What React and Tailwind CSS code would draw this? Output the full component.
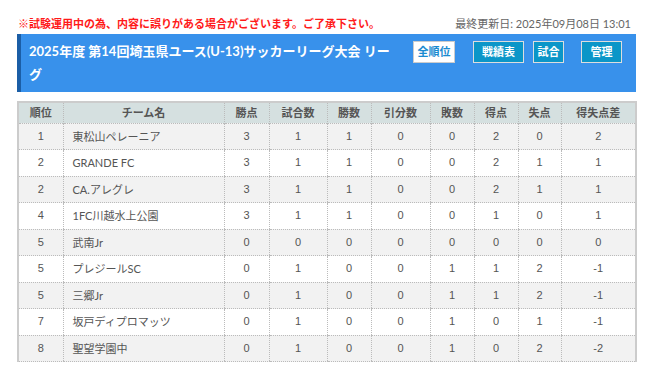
const rows = [
  ['1', '東松山ペレーニア', '3', '1', '1', '0', '0', '2', '0', '2'],
  ['2', 'GRANDE FC', '3', '1', '1', '0', '0', '2', '1', '1'],
  ['2', 'CA.アレグレ', '3', '1', '1', '0', '0', '2', '1', '1'],
  ['4', '1FC川越水上公園', '3', '1', '1', '0', '0', '1', '0', '1'],
  ['5', '武南Jr', '0', '0', '0', '0', '0', '0', '0', '0'],
  ['5', 'プレジールSC', '0', '1', '0', '0', '1', '1', '2', '-1'],
  ['5', '三郷Jr', '0', '1', '0', '0', '1', '1', '2', '-1'],
  ['7', '坂戸ディプロマッツ', '0', '1', '0', '0', '1', '0', '1', '-1'],
  ['8', '聖望学園中', '0', '1', '0', '0', '1', '0', '2', '-2'],
];

const heads = ['順位', 'チーム名', '勝点', '試合数', '勝数', '引分数', '敗数', '得点', '失点', '得失点差'];
const widths = ['w-[45px]', 'w-[161px]', 'w-[45px]', 'w-[58px]', 'w-[44px]', 'w-[59px]', 'w-[44px]', 'w-[44px]', 'w-[43px]', 'w-[75px]'];

export default function App() {
  return (
    <div className="w-[647px] h-[372px] bg-white font-['Lato','Noto_Sans_CJK_JP',sans-serif] text-[#555]">
      <div className="flex justify-between items-end pl-[18px] pr-[16px] pt-[14px] h-[34px] pb-[5px]">
        <span className="text-[11px] font-bold text-[#ff1a1a] leading-none">※試験運用中の為、内容に誤りがある場合がございます。ご了承下さい。</span>
        <span className="text-[11px] text-[#666] leading-none">最終更新日: 2025年09月08日 13:01</span>
      </div>
      <div className="ml-[17px] w-[619px] h-[58px] bg-[#3891eb] border-l-4 border-[#1b5ea6] flex items-start pl-[8px] pr-[14px] pt-[6px]">
        <div className="w-[370px] text-white font-bold text-[13px] leading-[23px]">
          2025年度 第14回埼玉県ユース(U-13)サッカーリーグ大会 リーグ
        </div>
        <div className="ml-auto flex items-center pt-[1px] text-[11px] font-bold">
          <span className="h-[22px] w-[42px] flex items-center justify-center bg-white text-[#1a8bd0] border border-[#ccc]">全順位</span>
          <span className="ml-[18px] h-[22px] w-[51px] flex items-center justify-center bg-[#0b96c8] text-white border border-[#ddd]">戦績表</span>
          <span className="ml-[9px] h-[22px] w-[31px] flex items-center justify-center bg-[#0b96c8] text-white border border-[#ddd]">試合</span>
          <span className="ml-[17px] h-[22px] w-[41px] flex items-center justify-center bg-[#0b96c8] text-white border border-[#ddd]">管理</span>
        </div>
      </div>
      <table className="ml-[17px] mt-[9px] border-collapse text-[11px] border-x-2 border-t-2 border-[#ccc]">
        <thead>
          <tr className="bg-[#d5e0e0] h-[21px]">
            {heads.map((h, i) => (
              <th key={i} className={`${widths[i]} p-0 font-bold text-[#555] border-l border-dotted border-[#bbb] first:border-l-0 leading-none`}>{h}</th>
            ))}
          </tr>
        </thead>
        <tbody>
          {rows.map((r, ri) => (
            <tr key={ri} className={`h-[26.5px] ${ri % 2 === 0 ? 'bg-[#f2f2f2]' : 'bg-white'}`}>
              {r.map((c, ci) => (
                <td
                  key={ci}
                  className={`p-0 border-t border-b border-l border-dotted border-[#bbb] first:border-l-0 leading-none ${ci === 1 ? "text-left pl-[9px] font-['Lato','Noto_Sans_CJK_JP',sans-serif]" : "text-center font-['Liberation_Sans',sans-serif]"}`}
                >
                  {c}
                </td>
              ))}
            </tr>
          ))}
        </tbody>
      </table>
    </div>
  );
}
